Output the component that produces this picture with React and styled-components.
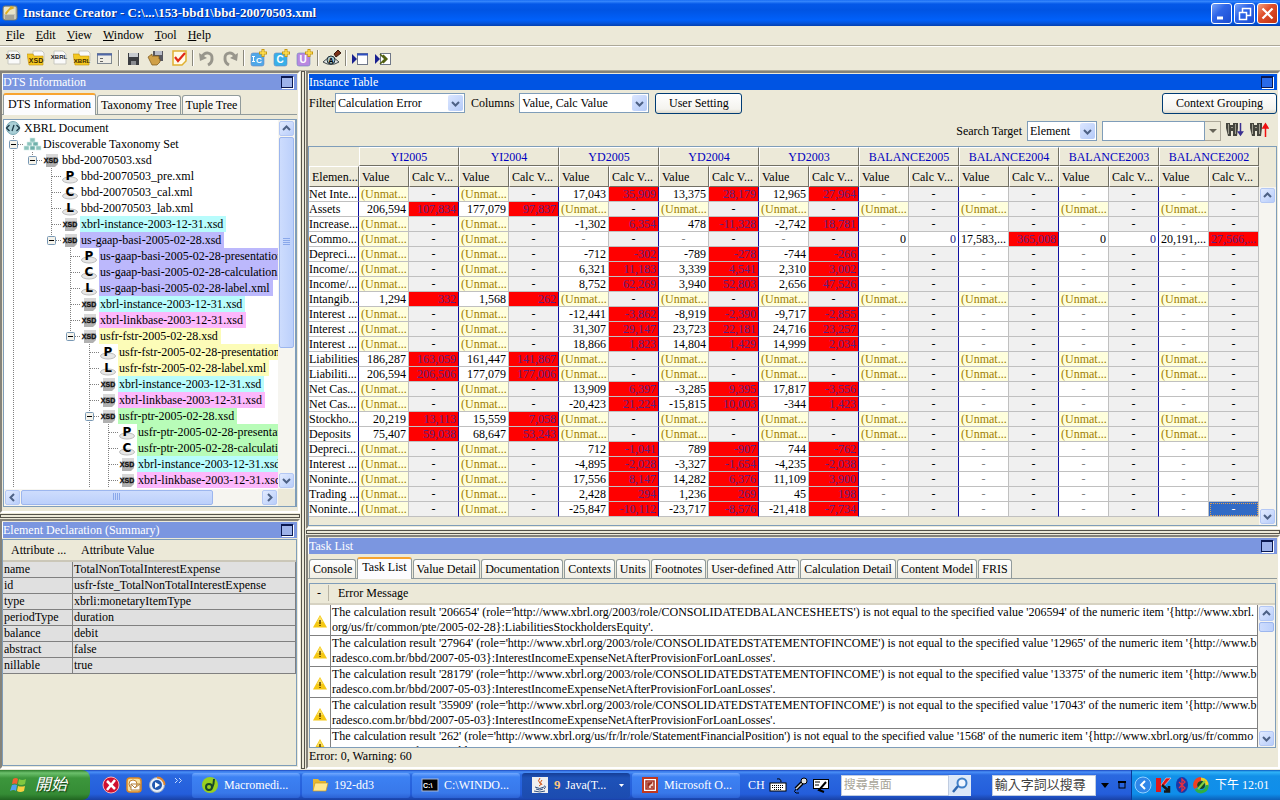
import React from 'react';
import styled, { createGlobalStyle, css } from 'styled-components';

const GlobalStyle = createGlobalStyle`
  * { box-sizing: border-box; }
  html, body { margin: 0; }
  body, button, input, select, table {
    font-family: "Liberation Serif", "Noto Sans CJK TC", serif;
    font-size: 12px;
    line-height: 16px;
    color: #000;
  }
  button, input, select { margin: 0; padding: 0; border-radius: 0; }
`;

const BEIGE = '#ece9d8';

/* ---------- window frame ---------- */
const Window = styled.div`
  display: flex;
  flex-direction: column;
  height: 100vh;
  min-height: 640px;
  background: ${BEIGE};
  overflow: hidden;
`;

const TitleBar = styled.header`
  display: flex;
  align-items: center;
  gap: 5px;
  height: 26px;
  flex: none;
  padding: 0 2px;
  background: linear-gradient(#0a5fee 0, #3b8cff 1px, #0458e8 4px, #0054e3 10px, #0060fa 20px, #0455dc 23px, #0340b0 26px);
`;

const WindowTitle = styled.h1`
  flex: 1;
  margin: 0;
  font-size: 13px;
  line-height: 18px;
  color: #fff;
  text-shadow: 1px 1px 0 #0a2a80;
`;

const CaptionButtons = styled.div`
  display: flex;
  gap: 2px;
`;

const CaptionButton = styled.button`
  width: 21px;
  height: 21px;
  display: grid;
  place-items: center;
  border: 1px solid #fff;
  border-radius: 3px;
  background: ${p => (p.$close
    ? 'linear-gradient(135deg, #f0a080, #e0502c 40%, #c03010)'
    : 'linear-gradient(135deg, #7aa4f8, #2f66e8 40%, #1c4cd0)')};
`;

const MenuBar = styled.nav`
  display: flex;
  gap: 11px;
  height: 19px;
  flex: none;
  padding: 1px 6px;
`;

const MenuButton = styled.button`
  border: 0;
  background: none;
  line-height: 17px;
  &::first-letter { text-decoration: underline; }
`;

const ToolBar = styled.div`
  display: flex;
  align-items: center;
  gap: 5px;
  height: 26px;
  flex: none;
  padding: 0 4px;
  border-top: 1px solid #aca899;
  border-bottom: 1px solid #aca899;
  box-shadow: inset 0 1px 0 #fff;
`;

const ToolButton = styled.button`
  width: 18px;
  height: 18px;
  border: 0;
  background: none;
  display: grid;
  place-items: center;
`;

const ToolSeparator = styled.span`
  width: 2px;
  height: 16px;
  margin: 0 -1px;
  background: #8a887c;
  border-right: 1px solid #fff;
`;

const Workspace = styled.main`
  flex: 1;
  min-height: 0;
  display: grid;
  grid-template-columns: 300px 4px minmax(0, 1fr);
  gap: 1px;
  padding-bottom: 1px;
`;

const Column = styled.div`
  min-width: 0;
  min-height: 0;
  display: grid;
  grid-template-rows: minmax(0, ${p => p.$top}fr) 4px minmax(0, ${p => p.$bottom}fr);
  gap: 1px;
`;

const Divider = styled.div`
  background: ${BEIGE};
  border: 1px solid #55534a;
`;

/* ---------- panels ---------- */
const Panel = styled.section`
  min-width: 0;
  min-height: 0;
  display: flex;
  flex-direction: column;
  padding: 1px 1px 1px 0;
  border: 2px solid #85837a;
  border-right-color: #fff;
  border-bottom-color: #fff;
  background: ${BEIGE};
`;

const PanelTitle = styled.div`
  display: flex;
  align-items: center;
  justify-content: space-between;
  height: 16px;
  flex: none;
  padding-right: 4px;
  background: ${p => (p.$active ? '#0054e3' : '#7b96e0')};
  border-left: 1px solid #fff;
  h2 { margin: 0; font-size: 12px; font-weight: 400; color: #fff; }
`;

const MaximizeButton = styled.button`
  width: 12px;
  height: 12px;
  border: 1px solid #0a1850;
  border-top-width: 2px;
  background: ${p => (p.$active ? '#2a6ae8' : '#9db2ea')};
  box-shadow: 1px 1px 0 #fff;
`;

const TabStrip = styled.div`
  display: flex;
  align-items: flex-end;
  gap: 1px;
  flex: none;
  height: ${p => p.$height}px;
  padding-left: 1px;
  border-bottom: 1px solid #919b9c;
`;

const Tab = styled.button`
  height: ${p => (p.$selected ? 22 : 19)}px;
  margin-bottom: ${p => (p.$selected ? -1 : 0)}px;
  padding: 0 3px;
  white-space: nowrap;
  border: 1px solid #919b9c;
  border-bottom: 0;
  border-radius: 3px 3px 0 0;
  background: linear-gradient(#fff, #f0eee4);
  ${p => p.$selected && css`
    padding: 0 4px 3px;
    border-top: 2px solid #f8a430;
    background: #fcfcfe;
  `}
`;

/* ---------- scroll bars ---------- */
const ScrollTrack = styled.div`
  display: flex;
  flex-direction: ${p => (p.$horizontal ? 'row' : 'column')};
  flex: none;
  gap: 1px;
  ${p => (p.$horizontal ? 'height: 17px;' : 'width: 17px;')}
  padding: 1px;
  background: #f6f5f0;
`;

const ScrollArrow = styled.button`
  width: 15px;
  height: 15px;
  flex: none;
  display: grid;
  place-items: center;
  border: 1px solid #b4c8f4;
  border-radius: 2px;
  background: linear-gradient(135deg, #e2ebff, #b8cdfa);
`;

const ScrollRail = styled.div`
  flex: 1;
  display: flex;
  flex-direction: ${p => (p.$horizontal ? 'row' : 'column')};
  min-height: 0;
`;

const ScrollThumb = styled.div`
  flex: 0 0 ${p => p.$size};
  display: grid;
  place-items: center;
  border: 1px solid #9cb6ee;
  border-radius: 2px;
  background: linear-gradient(${p => (p.$horizontal ? '180deg' : '90deg')}, #cddcfd, #bcd0fb);
  overflow: hidden;
`;

const arrows = {
  up: 'M1 6 L4.500 2.500 L8 6',
  down: 'M1 3 L4.500 6.500 L8 3',
  left: 'M6 1 L2.500 4.500 L6 8',
  right: 'M3 1 L6.500 4.500 L3 8',
};

const Chevron = ({ dir }) => (
  <svg width="9" height="9" viewBox="0 0 9 9" aria-hidden="true">
    <path d={arrows[dir]} fill="none" stroke="#4d6185" strokeWidth="2" />
  </svg>
);

function ScrollBar({ horizontal, thumb, grip }) {
  return (
    <ScrollTrack $horizontal={horizontal}>
      <ScrollArrow aria-label={horizontal ? 'Scroll left' : 'Scroll up'}><Chevron dir={horizontal ? 'left' : 'up'} /></ScrollArrow>
      <ScrollRail $horizontal={horizontal}>
        {thumb && (
          <ScrollThumb $size={thumb} $horizontal={horizontal}>
            {grip && (
              <svg width="8" height="8" viewBox="0 0 8 8" aria-hidden="true">
                <path d={horizontal ? 'M.5 0V7M2.500 0V7M4.500 0V7M6.500 0V7' : 'M0 .5H7M0 2.500H7M0 4.500H7M0 6.500H7'} stroke="#8aa8ea" />
              </svg>
            )}
          </ScrollThumb>
        )}
      </ScrollRail>
      <ScrollArrow aria-label={horizontal ? 'Scroll right' : 'Scroll down'}><Chevron dir={horizontal ? 'right' : 'down'} /></ScrollArrow>
    </ScrollTrack>
  );
}

/* ---------- taxonomy tree ---------- */
const TreeFrame = styled.div`
  flex: 1;
  min-height: 0;
  display: flex;
  flex-direction: column;
  margin: 4px 0 3px 1px;
  border: 1px solid #7f9db9;
  border-right: 2px solid #7f9db9;
  background: #fff;
`;

const TreeBody = styled.div`
  flex: 1;
  min-height: 0;
  display: flex;
`;

const TreeList = styled.ul`
  flex: 1;
  min-width: 0;
  margin: 0;
  padding: 0;
  list-style: none;
  overflow: hidden;
`;

const TreeRow = styled.li`
  display: flex;
  height: 16px;
  white-space: nowrap;
  svg { flex: none; }
`;

const TreeLabel = styled.span`
  flex: none;
  padding: 0 3px 0 1px;
  background: ${p => p.$tint || 'transparent'};
`;

const TreeFooter = styled.div`
  display: grid;
  grid-template-columns: minmax(0, 1fr) 17px;
  background: ${BEIGE};
`;

const Guide = ({ kind }) => (
  <svg width="19" height="16" viewBox="0 0 19 16" aria-hidden="true">
    {kind !== ' ' && (
      <path d={kind === 'E' ? 'M9.500 0V4' : 'M9.500 0V16'} stroke="#808080" strokeDasharray="1 1" />
    )}
    {(kind === 'T' || kind === 'E' || kind === 'B') && <path d="M10 8.500H19" stroke="#808080" strokeDasharray="1 1" />}
    {(kind === 'E' || kind === 'B') && (
      <g>
        <rect x="5.500" y="4.500" width="8" height="8" rx="1" fill="#f4f2ea" stroke="#7898b5" />
        <path d="M7 8.500H12" stroke="#000" />
      </g>
    )}
  </svg>
);

const TreeIcon = ({ kind }) => (
  <svg width="19" height="16" viewBox="0 0 19 16" aria-hidden="true">
    {kind === 'doc' && (
      <g>
        <circle cx="9" cy="8" r="6.500" fill="#a9cfd6" stroke="#7aa9b4" />
        <path d="M5.500 5L2.500 8L5.500 11M12.500 5L15.500 8L12.500 11M10 5L8 11" fill="none" stroke="#1d3a48" strokeWidth="1.300" />
      </g>
    )}
    {kind === 'set' && (
      <g fill="#8cc3bd" stroke="#d8efec" strokeWidth=".6">
        <rect x="7" y="2" width="5" height="5" />
        <rect x="4" y="6" width="5" height="4" /><rect x="10" y="6" width="5" height="4" fill="#6fb0aa" />
        <rect x="1" y="10" width="5" height="4" /><rect x="7" y="10" width="5" height="4" fill="#6fb0aa" /><rect x="13" y="10" width="5" height="4" />
      </g>
    )}
    {kind === 'xsd' && (
      <g>
        <path d="M4 2H16V12L13 15H4Z" fill="#b0b0b0" />
        <path d="M4 2H16V5H4Z" fill="#d8d8d8" />
        <text x="9" y="11" textAnchor="middle" fontFamily="Liberation Sans" fontWeight="700" fontSize="7" fill="#111" stroke="#111" strokeWidth=".3">XSD</text>
      </g>
    )}
    {'PCL'.includes(kind) && (
      <g>
        <ellipse cx="9" cy="12" rx="7.500" ry="3" fill="#e6e6e6" stroke="#bdbdbd" />
        <text x="9" y="12" textAnchor="middle" fontFamily="DejaVu Sans" fontWeight="700" fontSize="12" fill="#000">{kind}</text>
      </g>
    )}
  </svg>
);

const CYAN = '#b8fcfc';
const VIOLET = '#bcb8fc';
const PINK = '#fcb8fc';
const YELLOW = '#fcfcb8';
const GREEN = '#b8fcb8';

const treeRows = [
  ['', 'doc', 'XBRL Document'],
  ['B', 'set', 'Discoverable Taxonomy Set'],
  ['|E', 'xsd', 'bbd-20070503.xsd'],
  ['| T', 'P', 'bbd-20070503_pre.xml'],
  ['| T', 'C', 'bbd-20070503_cal.xml'],
  ['| T', 'L', 'bbd-20070503_lab.xml'],
  ['| T', 'xsd', 'xbrl-instance-2003-12-31.xsd', CYAN],
  ['| E', 'xsd', 'us-gaap-basi-2005-02-28.xsd', VIOLET],
  ['|  T', 'P', 'us-gaap-basi-2005-02-28-presentation.xml', VIOLET],
  ['|  T', 'C', 'us-gaap-basi-2005-02-28-calculation.xml', VIOLET],
  ['|  T', 'L', 'us-gaap-basi-2005-02-28-label.xml', VIOLET],
  ['|  T', 'xsd', 'xbrl-instance-2003-12-31.xsd', CYAN],
  ['|  T', 'xsd', 'xbrl-linkbase-2003-12-31.xsd', PINK],
  ['|  E', 'xsd', 'usfr-fstr-2005-02-28.xsd', YELLOW],
  ['|   T', 'P', 'usfr-fstr-2005-02-28-presentation.xml', YELLOW],
  ['|   T', 'L', 'usfr-fstr-2005-02-28-label.xml', YELLOW],
  ['|   T', 'xsd', 'xbrl-instance-2003-12-31.xsd', CYAN],
  ['|   T', 'xsd', 'xbrl-linkbase-2003-12-31.xsd', PINK],
  ['|   B', 'xsd', 'usfr-ptr-2005-02-28.xsd', GREEN],
  ['|   |T', 'P', 'usfr-ptr-2005-02-28-presentation.xml', GREEN],
  ['|   |T', 'C', 'usfr-ptr-2005-02-28-calculation.xml', GREEN],
  ['|   |T', 'xsd', 'xbrl-instance-2003-12-31.xsd', CYAN],
  ['|   |T', 'xsd', 'xbrl-linkbase-2003-12-31.xsd', PINK],
];

/* ---------- element declaration ---------- */
const DeclarationFrame = styled.div`
  flex: 1;
  min-height: 0;
  margin-top: 1px;
  border: 1px solid #7f9db9;
  overflow: hidden;
`;

const DeclarationTable = styled.table`
  width: 100%;
  table-layout: fixed;
  border-collapse: separate;
  border-spacing: 0;
  th {
    height: 22px;
    padding: 0 8px;
    font-weight: 400;
    text-align: left;
    border-bottom: 2px solid #cbc7b8;
  }
  th:first-child { width: 70px; white-space: nowrap; }
  td {
    height: 16px;
    padding: 0 1px;
    line-height: 15px;
    background: #e0e0e0;
    border-right: 1px solid #808080;
    border-bottom: 1px solid #808080;
  }
`;

const declarations = [
  ['name', 'TotalNonTotalInterestExpense'],
  ['id', 'usfr-fste_TotalNonTotalInterestExpense'],
  ['type', 'xbrli:monetaryItemType'],
  ['periodType', 'duration'],
  ['balance', 'debit'],
  ['abstract', 'false'],
  ['nillable', 'true'],
];

/* ---------- instance table ---------- */
const FilterBar = styled.div`
  display: flex;
  align-items: center;
  height: 24px;
  flex: none;
  margin-top: 1px;
  padding-left: 1px;
`;

const SearchBar = styled(FilterBar)`
  justify-content: flex-end;
  height: 30px;
  padding-right: 8px;
  gap: 5px;
`;

const Field = styled.label`
  display: flex;
  align-items: center;
  gap: ${p => p.$gap || 0}px;
  margin-right: ${p => p.$after || 0}px;
`;

const Spacer = styled.span`
  flex: 1;
`;

const SelectBox = styled.span`
  position: relative;
  display: inline-flex;
  width: ${p => p.$width}px;
  height: 20px;
  background: #fff;
  border: 1px solid #7f9db9;
`;

const NativeSelect = styled.select`
  appearance: none;
  flex: 1;
  min-width: 0;
  padding: 0 2px;
  border: 0;
  background: transparent;
`;

const SelectArrow = styled.span`
  position: absolute;
  top: 1px;
  right: 1px;
  width: 15px;
  height: 16px;
  display: grid;
  place-items: center;
  border-radius: 2px;
  background: linear-gradient(135deg, #dbe6ff, #b4caf8);
  pointer-events: none;
`;

function Select({ width, options }) {
  return (
    <SelectBox $width={width}>
      <NativeSelect>{options.map(o => <option key={o}>{o}</option>)}</NativeSelect>
      <SelectArrow><Chevron dir="down" /></SelectArrow>
    </SelectBox>
  );
}

const PushButton = styled.button`
  width: ${p => p.$width}px;
  height: 21px;
  border: 1px solid #003c74;
  border-radius: 3px;
  background: linear-gradient(#fff, #f4f3ee 80%, #dcd8cb);
`;

const SearchCombo = styled.span`
  display: flex;
  width: 119px;
  height: 20px;
`;

const SearchInput = styled.input`
  flex: 1;
  min-width: 0;
  border: 1px solid #7f9db9;
  background: #fff;
`;

const ComboButton = styled.button`
  width: 16px;
  border: 1px solid #aca899;
  border-left: 0;
  background: ${BEIGE};
  display: grid;
  place-items: center;
`;

const IconButton = styled.button`
  width: 19px;
  height: 18px;
  border: 0;
  background: none;
`;

const GridFrame = styled.div`
  flex: 1;
  min-height: 0;
  display: flex;
  align-items: stretch;
  border: 1px solid #7f9db9;
  overflow: hidden;
`;

const GridArea = styled.div`
  flex: 1;
  min-width: 0;
`;

const GridScroll = styled.div`
  display: flex;
  padding-top: 40px;
`;

const DataTable = styled.table`
  width: 100%;
  table-layout: fixed;
  border-collapse: separate;
  border-spacing: 0;
`;

const HeadCell = styled.th`
  height: ${p => (p.$group ? 19 : 21)}px;
  padding: 0 ${p => (p.$group ? 0 : 2)}px;
  font-weight: 400;
  text-align: ${p => (p.$group ? 'center' : 'left')};
  white-space: nowrap;
  overflow: hidden;
  color: ${p => (p.$group ? '#0000c0' : '#000')};
  border: 1px solid #fff;
  border-right-color: #716f64;
  border-bottom-color: #716f64;
  ${p => p.$blank && 'border-color: transparent;'}
`;

const cellLook = {
  label: css`text-align: left; padding: 0; border-right-color: #1010a0;`,
  value: css`text-align: right;`,
  calc: css`text-align: right; color: #202080; border-right-color: #1010a0;`,
  error: css`text-align: right; color: #602080; background: #ff0000; border-right-color: #1010a0;`,
  unmatched: css`text-align: left; color: #a08000; background: #ffffdc;`,
  none: css`text-align: center; color: #808080;`,
  noCalc: css`text-align: center; background: #f0f0f0; border-right-color: #1010a0;`,
  selected: css`text-align: center; color: #fff; background: #316ac5; outline: 1px dotted #e0a050; outline-offset: -2px;`,
};

const DataCell = styled.td`
  height: 15px;
  padding: 0 2px;
  line-height: 14px;
  white-space: nowrap;
  overflow: hidden;
  background: #fff;
  border-right: 1px solid #c0c0c0;
  border-bottom: 1px solid #c0c0c0;
  ${p => cellLook[p.$look]}
  ${p => p.$last && 'border-right-color: #c0c0c0;'}
`;

const groups = ['YI2005', 'YI2004', 'YD2005', 'YD2004', 'YD2003', 'BALANCE2005', 'BALANCE2004', 'BALANCE2003', 'BALANCE2002'];

const U = 'unmatched';
const N = 'none';
const flow = (label, ...pairs) => [label, U, U, ...pairs, N, N, N, N];
const stock = (label, ...pairs) => [label, ...pairs, U, U, U, U, U, U, U];

const instanceRows = [
  flow('Net Inte...', ['17,043', '35,909'], ['13,375', '28,179'], ['12,965', '27,964']),
  stock('Assets', ['206,594', '107,834'], ['177,079', '97,837']),
  flow('Increase...', ['-1,302', '6,354'], ['478', '-11,328'], ['-2,742', '18,781']),
  ['Commo...', U, U, N, N, N, ['0', '0'], ['17,583,...', '365,008'], ['0', '0'], ['20,191,...', '27,566,...']],
  flow('Depreci...', ['-712', '-302'], ['-789', '-278'], ['-744', '-266']),
  flow('Income/...', ['6,321', '11,183'], ['3,339', '4,541'], ['2,310', '3,002']),
  flow('Income/...', ['8,752', '62,269'], ['3,940', '52,803'], ['2,656', '47,526']),
  stock('Intangib...', ['1,294', '332'], ['1,568', '262']),
  flow('Interest ...', ['-12,441', '-3,862'], ['-8,919', '-2,390'], ['-9,717', '-2,855']),
  flow('Interest ...', ['31,307', '29,147'], ['23,723', '22,181'], ['24,716', '23,257']),
  flow('Interest ...', ['18,866', '1,823'], ['14,804', '1,429'], ['14,999', '2,034']),
  stock('Liabilities', ['186,287', '163,059'], ['161,447', '141,867']),
  stock('Liabiliti...', ['206,594', '206,506'], ['177,079', '177,006']),
  flow('Net Cas...', ['13,909', '6,397'], ['-3,285', '9,395'], ['17,817', '-3,556']),
  flow('Net Cas...', ['-20,423', '21,224'], ['-15,815', '10,003'], ['-344', '1,423']),
  stock('Stockho...', ['20,219', '13,113'], ['15,559', '7,058']),
  stock('Deposits', ['75,407', '59,038'], ['68,647', '53,243']),
  flow('Depreci...', ['712', '-1,041'], ['789', '-907'], ['744', '-762']),
  flow('Interest ...', ['-4,895', '-2,028'], ['-3,327', '-1,654'], ['-4,235', '-2,038']),
  flow('Noninte...', ['17,556', '8,147'], ['14,282', '6,376'], ['11,109', '3,900']),
  flow('Trading ...', ['2,428', '294'], ['1,236', '269'], ['45', '198']),
  flow('Noninte...', ['-25,847', '-10,112'], ['-23,717', '-8,576'], ['-21,418', '-7,734']),
];

function PairCells({ data, last, selected }) {
  if (data === U || data === N) {
    return (
      <>
        <DataCell $look={data}>{data === U ? '(Unmat...' : '-'}</DataCell>
        <DataCell $look={selected ? 'selected' : 'noCalc'} $last={last}>-</DataCell>
      </>
    );
  }
  return (
    <>
      <DataCell $look="value">{data[0]}</DataCell>
      <DataCell $look={data[1] === '0' ? 'calc' : 'error'} $last={last}>{data[1]}</DataCell>
    </>
  );
}

const Binoculars = ({ up }) => (
  <svg width="19" height="16" viewBox="0 0 19 16" aria-hidden="true">
    <path d="M0 1H4V3H7V1H12V6L11 14H7V9H5V14H2L0 6Z" fill="#45453e" />
    <path d="M2.500 2V12M9.500 2V12" stroke="#a09e90" />
    <path d="M5 5.500H7" stroke="#a09e90" />
    {up
      ? <path d="M15.500 15V5M13 6L15.500 2L18 6Z" stroke="#f01010" strokeWidth="1.500" fill="#f01010" />
      : <path d="M14.500 1V11M12.500 10L14.500 13L16.500 10Z" stroke="#3a3090" strokeWidth="1.500" fill="#3a3090" />}
  </svg>
);

/* ---------- task list ---------- */
const TaskBody = styled.div`
  flex: 1;
  min-height: 0;
  display: flex;
  flex-direction: column;
  margin: 4px 1px 0;
  border: 1px solid #7f9db9;
  background: #fff;
`;

const TaskHead = styled.div`
  display: flex;
  align-items: center;
  height: 21px;
  flex: none;
  background: ${BEIGE};
  border-bottom: 2px solid #d6d2c2;
  span:first-child { width: 19px; text-align: center; border-right: 1px solid #b8b4a4; }
  span:last-child { padding-left: 9px; }
`;

const TaskScroll = styled.div`
  flex: 1;
  min-height: 0;
  display: flex;
`;

const TaskRows = styled.ul`
  flex: 1;
  min-width: 0;
  margin: 0;
  padding: 0;
  list-style: none;
  overflow: hidden;
`;

const TaskRow = styled.li`
  display: grid;
  grid-template-columns: 20px minmax(0, 1fr);
  min-height: 31px;
  line-height: 15px;
  border-bottom: 1px solid #808080;
  svg { align-self: end; margin: 0 3px 7px; }
`;

const TaskText = styled.p`
  margin: 0;
  padding-left: 1px;
  border-left: 1px solid #808080;
  border-right: 1px solid #808080;
  word-break: break-all;
`;

const StatusLine = styled.div`
  height: 18px;
  flex: none;
  line-height: 17px;
  padding-left: 1px;
`;

const WarningIcon = () => (
  <svg width="14" height="13" viewBox="0 0 14 13" role="img" aria-label="Warning">
    <path d="M7 0L14 12.500H0Z" fill="#f5c814" />
    <path d="M7 1L10 7L4 7Z" fill="#fbe060" />
    <path d="M7 5V9M7 10V11" stroke="#5a3c00" strokeWidth="1.500" />
  </svg>
);

const taskTabs = ['Console', 'Task List', 'Value Detail', 'Documentation', 'Contexts', 'Units', 'Footnotes', 'User-defined Attr', 'Calculation Detail', 'Content Model', 'FRIS'];

const message = (result, role, value, item) =>
  `The calculation result '${result}' (role='http://www.xbrl.org/${role}') is not equal to the specified value '${value}' of the numeric item '{http://www.${item}'.`;

const INCOME = '2003/role/CONSOLIDATEDSTATEMENTOFINCOME';
const LOSSES = 'bradesco.com.br/bbd/2007-05-03}:InterestIncomeExpenseNetAfterProvisionForLoanLosses';
const PTE = 'xbrl.org/us/fr/common/pte/2005-02-28}:';

const tasks = [
  message('206654', '2003/role/CONSOLIDATEDBALANCESHEETS', '206594', `${PTE}LiabilitiesStockholdersEquity`),
  message('27964', INCOME, '12965', LOSSES),
  message('28179', INCOME, '13375', LOSSES),
  message('35909', INCOME, '17043', LOSSES),
  message('262', 'us/fr/lr/role/StatementFinancialPosition', '1568', `${PTE}IntangibleAssetsNet`),
];

/* ---------- windows task bar ---------- */
const TaskBar = styled.footer`
  display: flex;
  align-items: center;
  height: 30px;
  flex: none;
  background: linear-gradient(#1c48c0 0, #4a90f8 2px, #2a68e0 5px, #245edb 24px, #1941a5 30px);
  color: #fff;
`;

const StartButton = styled.button`
  display: flex;
  align-items: center;
  gap: 7px;
  width: 90px;
  height: 30px;
  flex: none;
  padding-left: 10px;
  border: 0;
  border-radius: 0 8px 8px 0;
  background: linear-gradient(#2c7c2c 0, #6cc06c 3px, #3c963c 8px, #358c35 24px, #206420 30px);
  color: #fff;
  font-size: 16px;
  font-style: italic;
  text-shadow: 1px 1px 1px #143c14;
`;

const QuickLaunch = styled.div`
  display: flex;
  align-items: center;
  gap: 5px;
  width: 102px;
  flex: none;
  padding-left: 12px;
`;

const BareButton = styled.button`
  display: grid;
  place-items: center;
  flex: none;
  width: ${p => p.$width || 18}px;
  height: 20px;
  border: 0;
  background: none;
  color: inherit;
`;

const TaskButton = styled.button`
  display: flex;
  align-items: center;
  gap: 5px;
  flex: 0 1 108px;
  min-width: 0;
  height: 25px;
  margin-right: 2px;
  padding: 0 6px 0 9px;
  border: 0;
  border-radius: 3px;
  color: #fff;
  white-space: nowrap;
  background: ${p => (p.$active ? 'linear-gradient(#153e96, #1e52b8 5px, #1c4cb0)' : 'linear-gradient(#70a8ff, #3c81f3 4px, #3878ea 20px, #2c62d4)')};
  b { color: #ffc880; font-size: 13px; }
`;

const LanguageBar = styled.div`
  display: flex;
  align-items: center;
  gap: 3px;
  flex: none;
  padding: 0 11px 0 6px;
`;

const DeskBox = styled.input`
  width: ${p => p.$width}px;
  height: 21px;
  flex: none;
  padding: 0 2px;
  border: 1px solid #c0cce0;
  background: #fff;
  font-size: ${p => p.$size}px;
  &::placeholder { color: ${p => p.$ink}; opacity: 1; }
`;

const SearchButton = styled.button`
  width: 22px;
  height: 21px;
  flex: none;
  border: 0;
  margin-right: 21px;
  background: #dce8f8;
  display: grid;
  place-items: center;
`;

const Tray = styled.div`
  display: flex;
  align-items: center;
  gap: 1px;
  height: 30px;
  flex: none;
  width: 149px;
  margin-left: auto;
  padding-left: 1px;
  background: linear-gradient(#0c5cc0 0, #30b4f8 2px, #1290e8 6px, #0f8eea 24px, #0c60b8 30px);
  border-left: 1px solid #0a3a98;
  time { padding-left: 4px; white-space: nowrap; }
`;

/* ---------- tool bar drawings ---------- */
const Svg = ({ children, w = 18, h = 18 }) => (
  <svg width={w} height={h} viewBox={`0 0 ${w} ${h}`} aria-hidden="true">{children}</svg>
);

const FileBadge = ({ text, gold }) => (
  <Svg>
    <path d={gold ? 'M6 2H15L17 4V12H6Z' : 'M4 2H13L16 5V15H4Z'} fill="#fafafa" stroke="#c8c8c0" />
    {gold && <path d="M0 5H6L7 7H16V16H2Z" fill="#f4c820" stroke="#c09010" strokeWidth=".6" />}
    <text x="9" y={gold ? 14 : 10} textAnchor="middle" fontFamily="Liberation Sans" fontWeight="700" fontSize={text.length > 3 ? 6 : 7} fill={gold ? '#3c2800' : '#222'}>{text}</text>
  </Svg>
);

const ContextBadge = ({ text, tint, instance }) => (
  <Svg>
    <rect x="2" y="4" width="13" height="13" rx="2" fill={tint} stroke="#6a88c0" strokeWidth=".6" />
    {instance && <path d="M4.500 7V13M3 7.500H6M3 12.500H6" stroke="#fff" />}
    <text x={instance ? 10 : 8} y="14" textAnchor="middle" fontFamily="Liberation Sans" fontWeight="700" fontSize={instance ? 8 : 10} fill="#fff">{text}</text>
    <path d="M14 0V8M10 4H18" stroke="#c89a10" strokeWidth="3" />
    <path d="M14 1V7M11 4H17" stroke="#ffe050" strokeWidth="1.500" />
  </Svg>
);

const UndoIcon = ({ redo }) => (
  <Svg>
    <g transform={redo ? 'matrix(-1 0 0 1 18 0)' : undefined}>
      <path d="M4 8C6 2 15 3 14 10C14 13 12 15 10 16" fill="none" stroke="#98968c" strokeWidth="3" />
      <path d="M1 4L2 12L9 9Z" fill="#98968c" />
    </g>
  </Svg>
);

const tools = [
  ['Open XSD', <FileBadge text="XSD" />],
  ['Open XSD folder', <FileBadge text="XSD" gold />],
  ['Open XBRL', <FileBadge text="XBRL" />],
  ['Open XBRL folder', <FileBadge text="XBRL" gold />],
  ['Form', <Svg><rect x="1.500" y="4.500" width="14" height="10" fill="#f0eee6" stroke="#808890" /><path d="M1 5.500H16" stroke="#5068a8" strokeWidth="2" /><path d="M4 9.500H7M4 12.500H7" stroke="#666" /></Svg>],
  null,
  ['Save', <Svg><path d="M4 4H15V16H4Z" fill="#3a3c40" /><path d="M5 4H14V8H5Z" fill="#c8ccd0" /><path d="M7 12H12V16H7Z" fill="#8a8c90" /></Svg>],
  ['Save all', <Svg><path d="M6 2H16V12H6Z" fill="#585860" /><path d="M8 2H15V6H8Z" fill="#b8bcc8" /><path d="M1 8L5 5V7H12V10H13V13L10 16H5L3 12Z" fill="#d0a048" stroke="#7a5418" strokeWidth=".7" /></Svg>],
  ['Validate', <Svg><path d="M3 2H16V12L12 16H3Z" fill="#fffbe8" stroke="#e0b030" strokeWidth="1.500" /><path d="M5 8L8 12L15 4" fill="none" stroke="#e02818" strokeWidth="2.200" /></Svg>],
  null,
  ['Undo', <UndoIcon />],
  ['Redo', <UndoIcon redo />],
  null,
  ['Add instance context', <ContextBadge text="C" tint="#50a8e8" instance />],
  ['Add context', <ContextBadge text="C" tint="#38b0e8" />],
  ['Add unit', <ContextBadge text="U" tint="#b888e0" />],
  null,
  ['Search', <Svg><path d="M11 5L15 1L18 4L13 8Z" fill="#7a3018" stroke="#38180c" /><path d="M0 13Q8 4 16 13Q8 18 0 13Z" fill="#e0e4e4" stroke="#404848" /><circle cx="8" cy="11" r="4" fill="#a8c4c8" stroke="#203038" /><text x="8" y="14" textAnchor="middle" fontFamily="Liberation Sans" fontWeight="700" fontSize="7">A</text></Svg>],
  null,
  ['Step into', <Svg><rect x="6.500" y="4.500" width="10" height="11" fill="#fff" stroke="#707888" /><path d="M6 5.500H17" stroke="#3050c0" strokeWidth="2" /><path d="M1 5L6 10L1 15Z" fill="#182090" /></Svg>],
  ['Run all', <Svg><rect x="6.500" y="4.500" width="10" height="11" fill="#fff" stroke="#707888" /><path d="M1 5L6 10L1 15Z" fill="#182090" /><path d="M6 5L11 10L6 15M9 6L13 10L9 14" fill="none" stroke="#506010" strokeWidth="1.500" /></Svg>],
];

const caption = [
  ['Minimize', 'M5 14H11', 3],
  ['Restore', 'M7.500 9V4.500H15.500V11.500H12M4.500 8.500H11.500V15.500H4.500Z', 1.5],
  ['Close', 'M4.500 4.500L14.500 14.500M14.500 4.500L4.500 14.500', 2.2],
];

const taskButtons = [
  ['Macromedi...', <Svg><circle cx="9" cy="9" r="8" fill="#98d020" /><circle cx="8" cy="11" r="3" fill="none" stroke="#184828" strokeWidth="2" /><path d="M11 12Q13 8 13 3" fill="none" stroke="#184828" strokeWidth="2" /></Svg>],
  ['192-dd3', <Svg><path d="M2 3H7L9 5H15V15H2Z" fill="#e8b830" /><path d="M2 15L4 7H17L15 15Z" fill="#ffe890" stroke="#c89820" strokeWidth=".7" /></Svg>],
  ['C:\\WINDO...', <Svg><rect x="1" y="3" width="16" height="12" fill="#000" stroke="#a8b8d8" /><text x="2" y="12" fontFamily="Liberation Sans" fontWeight="700" fontSize="7" fill="#fff">C:\</text></Svg>],
  ['Java(T...', <Svg><rect x="1" y="1" width="16" height="16" fill="#f0f0f0" /><path d="M9 2Q6 5 9 7Q11 9 8 10M11 4Q8 6 11 9" stroke="#d05010" fill="none" /><path d="M4 11Q9 14 13 11M5 13Q9 15 12 13M3 15Q9 17 14 15M13 10Q16 10 13 13" stroke="#305080" fill="none" /></Svg>, true],
  ['Microsoft O...', <Svg><rect x="2" y="2" width="14" height="14" fill="#fff" stroke="#c03820" strokeWidth="2" /><rect x="5" y="5" width="8" height="8" fill="#f0c8b8" stroke="#a83020" strokeWidth="1.500" /><path d="M7 12V7H11M7 10L11 6M11 10V12" stroke="#982818" strokeWidth="1.500" fill="none" /></Svg>],
];

export default function App() {
  return (
    <Window>
      <GlobalStyle />
      <TitleBar>
        <Svg w={16} h={18}>
          <rect x="1" y="2" width="14" height="14" rx="2" fill="#c8c8b8" stroke="#707468" />
          <path d="M2 3H13V10H2Z" fill="#e8e4c8" />
          <path d="M3 9L9 2L13 4L8 6L4 11Z" fill="#e0b020" />
          <path d="M3 12H12M3 14H12" stroke="#808078" />
        </Svg>
        <WindowTitle>{'Instance Creator - C:\\...\\153-bbd1\\bbd-20070503.xml'}</WindowTitle>
        <CaptionButtons>
          {caption.map(([name, d, width]) => (
            <CaptionButton key={name} aria-label={name} $close={name === 'Close'}>
              <svg width="19" height="19" viewBox="0 0 19 19"><path d={d} fill="none" stroke="#fff" strokeWidth={width} /></svg>
            </CaptionButton>
          ))}
        </CaptionButtons>
      </TitleBar>
      <MenuBar>
        {['File', 'Edit', 'View', 'Window', 'Tool', 'Help'].map(m => <MenuButton key={m}>{m}</MenuButton>)}
      </MenuBar>
      <ToolBar>
        {tools.map((t, i) => (t ? <ToolButton key={i} aria-label={t[0]}>{t[1]}</ToolButton> : <ToolSeparator key={i} />))}
      </ToolBar>

      <Workspace>
        <Column $top={441} $bottom={250}>
          <Panel>
            <PanelTitle><h2>DTS Information</h2><MaximizeButton aria-label="Maximize" /></PanelTitle>
            <TabStrip $height={25}>
              <Tab $selected>DTS Information</Tab>
              <Tab>Taxonomy Tree</Tab>
              <Tab>Tuple Tree</Tab>
            </TabStrip>
            <TreeFrame>
              <TreeBody>
                <TreeList>
                  {treeRows.map(([guides, icon, text, tint], i) => (
                    <TreeRow key={i}>
                      {guides.split('').map((g, j) => <Guide key={j} kind={g} />)}
                      <TreeIcon kind={icon} />
                      <TreeLabel $tint={tint}>{text}</TreeLabel>
                    </TreeRow>
                  ))}
                </TreeList>
                <ScrollBar thumb="63%" grip />
              </TreeBody>
              <TreeFooter><ScrollBar horizontal thumb="80%" grip /></TreeFooter>
            </TreeFrame>
          </Panel>
          <Divider />
          <Panel>
            <PanelTitle><h2>Element Declaration (Summary)</h2><MaximizeButton aria-label="Maximize" /></PanelTitle>
            <DeclarationFrame>
              <DeclarationTable>
                <thead><tr><th>Attribute ...</th><th>Attribute Value</th></tr></thead>
                <tbody>
                  {declarations.map(([k, v]) => <tr key={k}><td>{k}</td><td>{v}</td></tr>)}
                </tbody>
              </DeclarationTable>
            </DeclarationFrame>
          </Panel>
        </Column>

        <Divider />

        <Column $top={457} $bottom={234}>
          <Panel>
            <PanelTitle $active><h2>Instance Table</h2><MaximizeButton $active aria-label="Maximize" /></PanelTitle>
            <FilterBar>
              <Field $after={6}>Filter<Select width={130} options={['Calculation Error']} /></Field>
              <Field $gap={5} $after={6}>Columns<Select width={130} options={['Value, Calc Value']} /></Field>
              <PushButton $width={87}>User Setting</PushButton>
              <Spacer />
              <PushButton $width={115}>Context Grouping</PushButton>
            </FilterBar>
            <SearchBar>
              <Field $gap={5}>Search Target<Select width={70} options={['Element']} /></Field>
              <SearchCombo>
                <SearchInput aria-label="Search text" />
                <ComboButton aria-label="Search history"><svg width="8" height="4" viewBox="0 0 8 4"><path d="M0 0H8L4 4Z" fill="#666458" /></svg></ComboButton>
              </SearchCombo>
              <IconButton aria-label="Search down"><Binoculars /></IconButton>
              <IconButton aria-label="Search up"><Binoculars up /></IconButton>
            </SearchBar>
            <GridFrame>
              <GridArea>
                <DataTable>
                  <colgroup>{Array.from({ length: 19 }, (_, i) => <col key={i} />)}</colgroup>
                  <thead>
                    <tr>
                      <HeadCell $group $blank />
                      {groups.map(g => <HeadCell key={g} $group colSpan={2}>{g}</HeadCell>)}
                    </tr>
                    <tr>
                      <HeadCell>Elemen...</HeadCell>
                      {groups.map(g => (
                        <React.Fragment key={g}>
                          <HeadCell>Value</HeadCell>
                          <HeadCell>Calc V...</HeadCell>
                        </React.Fragment>
                      ))}
                    </tr>
                  </thead>
                  <tbody>
                    {instanceRows.map(([label, ...pairs], r) => (
                      <tr key={r}>
                        <DataCell $look="label">{label}</DataCell>
                        {pairs.map((p, c) => (
                          <PairCells key={c} data={p} last={c === 8} selected={c === 8 && r === instanceRows.length - 1} />
                        ))}
                      </tr>
                    ))}
                  </tbody>
                </DataTable>
              </GridArea>
              <GridScroll><ScrollBar /></GridScroll>
            </GridFrame>
          </Panel>
          <Divider />
          <Panel>
            <PanelTitle><h2>Task List</h2><MaximizeButton aria-label="Maximize" /></PanelTitle>
            <TabStrip $height={25}>
              {taskTabs.map(t => <Tab key={t} $selected={t === 'Task List'}>{t}</Tab>)}
            </TabStrip>
            <TaskBody>
              <TaskHead><span>-</span><span>Error Message</span></TaskHead>
              <TaskScroll>
                <TaskRows>
                  {tasks.map(text => (
                    <TaskRow key={text}>
                      <WarningIcon />
                      <TaskText>{text}</TaskText>
                    </TaskRow>
                  ))}
                </TaskRows>
                <ScrollBar thumb="10px" />
              </TaskScroll>
            </TaskBody>
            <StatusLine>Error: 0, Warning: 60</StatusLine>
          </Panel>
        </Column>
      </Workspace>

      <TaskBar>
        <StartButton>
          <Svg>
            <path d="M3 3Q6 1 8 3L7 8Q5 7 2 8Z" fill="#f06030" />
            <path d="M9 3Q12 5 16 3L15 8Q11 10 8 8Z" fill="#80c840" />
            <path d="M2 9Q5 8 7 9L6 15Q4 13 0 15Z" fill="#50a0f0" />
            <path d="M8 10Q11 11 15 10L14 15Q10 17 7 15Z" fill="#f8d040" />
          </Svg>
          開始
        </StartButton>
        <QuickLaunch>
          <BareButton aria-label="Messenger"><Svg><circle cx="9" cy="9" r="8" fill="#d01030" stroke="#ffb0b0" /><path d="M5 5L13 13M13 4L5 14" stroke="#fff" strokeWidth="2.500" /></Svg></BareButton>
          <BareButton aria-label="Mail"><Svg><rect x="2" y="2" width="14" height="14" rx="3" fill="#f8e0a0" stroke="#e08820" strokeWidth="1.500" /><circle cx="8" cy="8" r="4" fill="#fff" stroke="#c08030" /><path d="M6 8H15V14H6ZM6 8L10 12L15 8" fill="#fff" stroke="#b08040" /></Svg></BareButton>
          <BareButton aria-label="Media player"><Svg><circle cx="9" cy="9" r="7.500" fill="#e8eef8" stroke="#98a8c0" strokeWidth="1" /><path d="M9 1.500A7.500 7.500 0 0 1 16.500 9" fill="none" stroke="#e08830" strokeWidth="2" /><circle cx="9" cy="9" r="5" fill="#2058b0" /><path d="M7 6L12 9L7 12Z" fill="#fff" /></Svg></BareButton>
          <BareButton $width={14} aria-label="More shortcuts"><svg width="9" height="16" viewBox="0 0 9 16"><path d="M1 1L3.500 3.500L1 6M5 1L7.500 3.500L5 6" fill="none" stroke="#c8dcff" /></svg></BareButton>
        </QuickLaunch>
        {taskButtons.map(([label, icon, active]) => (
          <TaskButton key={label} $active={active}>
            {icon}
            {active && <b>9</b>}
            {label}
            {active && <><Spacer /><svg width="5" height="3" viewBox="0 0 5 3"><path d="M0 0H5L2.500 3Z" fill="#fff" /></svg></>}
          </TaskButton>
        ))}
        <LanguageBar>
          CH
          <BareButton $width={20} aria-label="Keyboard"><Svg><path d="M8 3Q12 2 12 6" stroke="#000" fill="none" /><rect x="1" y="7" width="16" height="8" fill="#fff" stroke="#000" /><path d="M3 9.500H15M3 11.500H15M5 13.500H13" stroke="#000" strokeDasharray="1 1" /></Svg></BareButton>
          <BareButton aria-label="Microphone"><Svg><path d="M11 7L5 13" stroke="#000" strokeWidth="4" /><path d="M11 7L5 13" stroke="#d8d8d8" strokeWidth="1.500" /><circle cx="13" cy="5" r="3" fill="#e0e0e0" stroke="#000" /><path d="M5 13Q2 16 5 17H8" fill="none" stroke="#000" /></Svg></BareButton>
          <BareButton aria-label="Handwriting"><Svg><rect x="1.500" y="3.500" width="15" height="9" fill="#fff" stroke="#000" /><path d="M3 6H8M3 9H7" stroke="#000" /><path d="M14 6L7 14L12 16" stroke="#000" fill="none" strokeWidth="2" /></Svg></BareButton>
        </LanguageBar>
        <DeskBox $width={108} $size={12} $ink="#a8a498" placeholder="搜尋桌面" aria-label="搜尋桌面" />
        <SearchButton aria-label="Search desktop"><Svg><circle cx="11" cy="7" r="4.500" fill="#f0f6ff" stroke="#4080c8" strokeWidth="2" /><path d="M7 10L2 16" stroke="#3068b0" strokeWidth="2.500" /></Svg></SearchButton>
        <DeskBox $width={104} $size={13} $ink="#404040" placeholder="輸入字詞以搜尋" aria-label="輸入字詞以搜尋" />
        <BareButton aria-label="Options"><svg width="8" height="5" viewBox="0 0 8 5"><path d="M0 0H8L4 5Z" fill="#000" /></svg></BareButton>
        <BareButton $width={16} aria-label="Restore"><svg width="8" height="8" viewBox="0 0 8 8"><rect x="1" y="1" width="6" height="6" fill="none" stroke="#000" /><path d="M0 1H8" stroke="#000" strokeWidth="2" /></svg></BareButton>
        <Tray>
          <BareButton $width={20} aria-label="Show hidden icons"><Svg><circle cx="9" cy="9" r="8" fill="#2f86e8" stroke="#90d0ff" /><path d="M11 5L7 9L11 13" fill="none" stroke="#fff" strokeWidth="2" /></Svg></BareButton>
          <BareButton aria-label="Kaspersky"><Svg><path d="M2 2H7V16H2Z" fill="#e01818" /><path d="M7 9L12 2H17L9 11Z" fill="#e01818" stroke="#fff" strokeWidth=".5" /><path d="M8 9L15 15M15 10V15.500H10" fill="none" stroke="#181818" strokeWidth="2.500" /></Svg></BareButton>
          <BareButton aria-label="Bluetooth"><Svg><ellipse cx="9" cy="9" rx="6" ry="8" fill="#1838a8" /><path d="M6 6L12 12L9 15V3L12 6L6 12" fill="none" stroke="#e83040" strokeWidth="1.300" /></Svg></BareButton>
          <BareButton aria-label="Network"><Svg><circle cx="9" cy="9" r="4" fill="#184820" /><path d="M9 3A6 6 0 0 0 4 12" fill="none" stroke="#f04020" strokeWidth="4" /><path d="M9 3A6 6 0 0 1 15 10" fill="none" stroke="#f0d020" strokeWidth="3" /><path d="M15 9A6 6 0 0 1 4 13" fill="none" stroke="#30b040" strokeWidth="3" /><path d="M6 13L13 5" stroke="#80d040" strokeWidth="2" /></Svg></BareButton>
          <time>下午 12:01</time>
        </Tray>
      </TaskBar>
    </Window>
  );
}
